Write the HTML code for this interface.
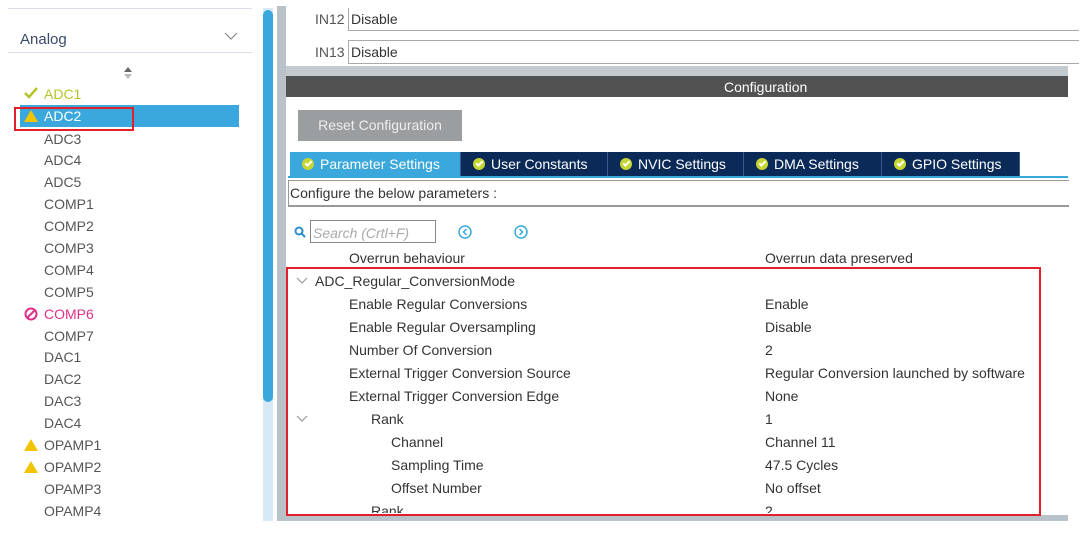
<!DOCTYPE html><html><head><style>
body{margin:0;width:1080px;height:555px;background:#fff;position:relative;overflow:hidden;font-family:"Liberation Sans",sans-serif;font-size:14px;color:#444}
.a{position:absolute}
.li{position:absolute;left:44px;color:#555;font-size:14px;line-height:16px}
.r{position:absolute;font-size:14px;color:#333;line-height:16px;white-space:nowrap}
.tab{position:absolute;top:152px;height:24px;background:#0b2a58;color:#fff;font-size:14px;line-height:24px;box-sizing:border-box;border-right:1px solid #3a5a8a}
.ck{display:inline-block;width:12px;height:12px;border-radius:50%;background:#c7d533;vertical-align:-1px;margin:0 6px 0 12px;position:relative}
.ck:after{content:"";position:absolute;left:3px;top:3px;width:5px;height:2px;border-left:2px solid #fff;border-bottom:2px solid #fff;transform:rotate(-45deg)}
.warn{position:absolute;left:24px;width:0;height:0;border-left:7px solid transparent;border-right:7px solid transparent;border-bottom:12px solid #f2c400}
</style></head><body>
<div class="a" style="left:8px;top:8px;width:244px;height:1px;background:#dde"></div>
<div class="a" style="left:20px;top:31px;font-size:15px;color:#3a4a6a">Analog</div>
<svg class="a" style="left:224px;top:32px" width="14" height="9"><path d="M1 1l6 6 6-6" fill="none" stroke="#888" stroke-width="1.2"/></svg>
<div class="a" style="left:8px;top:52px;width:244px;height:1px;background:#dde"></div>
<svg class="a" style="left:124px;top:67px" width="8" height="12"><path d="M0 5L4 0 8 5z" fill="#666"/><path d="M0 7L4 12 8 7z" fill="#bbb"/></svg>
<div class="a" style="left:20px;top:105px;width:219px;height:22px;background:#3aa8dc"></div>
<div class="a" style="left:14px;top:107px;width:116px;height:20px;border:2px solid #e0202a"></div>
<svg class="a" style="left:24px;top:87px" width="14" height="12"><path d="M1 6l4 4 8-9" fill="none" stroke="#b5c42a" stroke-width="2.5"/></svg>
<div class="li" style="top:86px;color:#b5c42a">ADC1</div>
<div class="warn" style="top:110px"></div>
<div class="li" style="top:108px;color:#fff">ADC2</div>
<div class="li" style="top:131px">ADC3</div>
<div class="li" style="top:152px">ADC4</div>
<div class="li" style="top:174px">ADC5</div>
<div class="li" style="top:196px">COMP1</div>
<div class="li" style="top:218px">COMP2</div>
<div class="li" style="top:240px">COMP3</div>
<div class="li" style="top:262px">COMP4</div>
<div class="li" style="top:284px">COMP5</div>
<svg class="a" style="left:24px;top:307px" width="14" height="14"><circle cx="7" cy="7" r="5.5" fill="none" stroke="#e0308a" stroke-width="2"/><path d="M3 11L11 3" stroke="#e0308a" stroke-width="2"/></svg>
<div class="li" style="top:306px;color:#e0308a">COMP6</div>
<div class="li" style="top:328px">COMP7</div>
<div class="li" style="top:349px">DAC1</div>
<div class="li" style="top:371px">DAC2</div>
<div class="li" style="top:393px">DAC3</div>
<div class="li" style="top:415px">DAC4</div>
<div class="warn" style="top:439px"></div>
<div class="li" style="top:437px">OPAMP1</div>
<div class="warn" style="top:461px"></div>
<div class="li" style="top:459px">OPAMP2</div>
<div class="li" style="top:481px">OPAMP3</div>
<div class="li" style="top:503px">OPAMP4</div>
<div class="a" style="left:263px;top:8px;width:10px;height:513px;background:#d6e9f5"></div>
<div class="a" style="left:263px;top:10px;width:10px;height:392px;background:#3aa8dc;border-radius:5px"></div>
<div class="a" style="left:277px;top:6px;width:9px;height:515px;background:#b9c2c8"></div>
<div class="a" style="left:286px;top:515px;width:782px;height:6px;background:#b9c2c8"></div>
<div class="a" style="left:286px;top:66px;width:782px;height:10px;background:#c4cbd0"></div>
<div class="r" style="left:315px;top:11px;color:#555">IN12</div>
<div class="a" style="left:348px;top:8px;width:730px;height:22px;border-left:1px solid #aaa;border-bottom:1px solid #aaa"></div>
<div class="r" style="left:351px;top:11px">Disable</div>
<div class="r" style="left:315px;top:44px;color:#555">IN13</div>
<div class="a" style="left:348px;top:40px;width:730px;height:22px;border:1px solid #aaa;border-right:none"></div>
<div class="r" style="left:351px;top:44px">Disable</div>
<div class="a" style="left:286px;top:76px;width:782px;height:21px;background:#525252"></div>
<div class="r" style="left:724px;top:79px;color:#fff">Configuration</div>
<div class="a" style="left:1068px;top:76px;width:12px;height:445px;background:#fff"></div>
<div class="a" style="left:298px;top:110px;width:164px;height:31px;background:#9b9ea1;color:#eee;font-size:14px;line-height:31px;text-align:center">Reset Configuration</div>
<div class="tab" style="left:290px;width:171px;background:#3aa8dc"><span class="ck"></span>Parameter Settings</div>
<div class="tab" style="left:461px;width:147px"><span class="ck"></span>User Constants</div>
<div class="tab" style="left:608px;width:136px"><span class="ck"></span>NVIC Settings</div>
<div class="tab" style="left:744px;width:138px"><span class="ck"></span>DMA Settings</div>
<div class="tab" style="left:882px;width:138px"><span class="ck"></span>GPIO Settings</div>
<div class="a" style="left:288px;top:176px;width:780px;height:2px;background:#3aa8dc"></div>
<div class="a" style="left:288px;top:180px;width:780px;height:24px;border-top:1px solid #999;border-bottom:2px solid #999;border-left:1px solid #999"></div>
<div class="r" style="left:290px;top:185px">Configure the below parameters :</div>
<svg class="a" style="left:294px;top:226px" width="12" height="12"><circle cx="5" cy="5" r="3.5" fill="none" stroke="#2a8ed0" stroke-width="2"/><path d="M7.5 7.5l3.5 3.5" stroke="#2a8ed0" stroke-width="2"/></svg>
<div class="a" style="left:310px;top:220px;width:126px;height:23px;border:1px solid #888;box-sizing:border-box"></div>
<div class="r" style="left:313px;top:225px;color:#aaa;font-style:italic">Search (Crtl+F)</div>
<svg class="a" style="left:458px;top:225px" width="14" height="14"><circle cx="7" cy="7" r="6" fill="none" stroke="#3aa8dc" stroke-width="1.5"/><path d="M8.5 4L5.5 7l3 3" fill="none" stroke="#3aa8dc" stroke-width="1.5"/></svg>
<svg class="a" style="left:514px;top:225px" width="14" height="14"><circle cx="7" cy="7" r="6" fill="none" stroke="#3aa8dc" stroke-width="1.5"/><path d="M5.5 4l3 3-3 3" fill="none" stroke="#3aa8dc" stroke-width="1.5"/></svg>
<div class="r" style="left:349px;top:250px">Overrun behaviour</div><div class="r" style="left:765px;top:250px">Overrun data preserved</div>
<svg class="a" style="left:296px;top:277px" width="12" height="8"><path d="M1 1l5 5 5-5" fill="none" stroke="#999" stroke-width="1.2"/></svg>
<div class="r" style="left:315px;top:273px">ADC_Regular_ConversionMode</div>
<div class="r" style="left:349px;top:296px">Enable Regular Conversions</div><div class="r" style="left:765px;top:296px">Enable</div>
<div class="r" style="left:349px;top:319px">Enable Regular Oversampling</div><div class="r" style="left:765px;top:319px">Disable</div>
<div class="r" style="left:349px;top:342px">Number Of Conversion</div><div class="r" style="left:765px;top:342px">2</div>
<div class="r" style="left:349px;top:365px">External Trigger Conversion Source</div><div class="r" style="left:765px;top:365px">Regular Conversion launched by software</div>
<div class="r" style="left:349px;top:388px">External Trigger Conversion Edge</div><div class="r" style="left:765px;top:388px">None</div>
<svg class="a" style="left:296px;top:415px" width="12" height="8"><path d="M1 1l5 5 5-5" fill="none" stroke="#999" stroke-width="1.2"/></svg>
<div class="r" style="left:371px;top:411px">Rank</div><div class="r" style="left:765px;top:411px">1</div>
<div class="r" style="left:391px;top:434px">Channel</div><div class="r" style="left:765px;top:434px">Channel 11</div>
<div class="r" style="left:391px;top:457px">Sampling Time</div><div class="r" style="left:765px;top:457px">47.5 Cycles</div>
<div class="r" style="left:391px;top:480px">Offset Number</div><div class="r" style="left:765px;top:480px">No offset</div>
<div class="a" style="left:286px;top:500px;width:782px;height:13px;overflow:hidden">
<div class="r" style="left:85px;top:3px">Rank</div><div class="r" style="left:479px;top:3px">2</div></div>
<div class="a" style="left:286px;top:267px;width:751px;height:245px;border:2px solid #e0202a"></div>
</body></html>
